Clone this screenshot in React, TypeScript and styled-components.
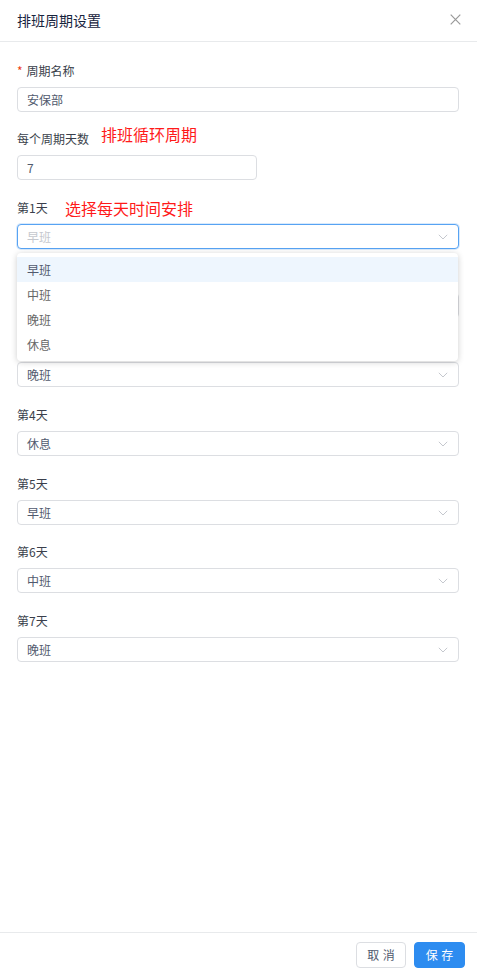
import React from "react";
import styled, { createGlobalStyle } from "styled-components";

const Global = createGlobalStyle`
  html, body { margin: 0; padding: 0; background: #fff; }
  body { font-family: "Noto Sans CJK SC", "Noto Sans", sans-serif; -webkit-font-smoothing: antialiased; }
  * { box-sizing: border-box; }
`;

const Modal = styled.div`
  height: 100vh;
  display: flex;
  flex-direction: column;
  overflow: hidden;
  color: #515a6e;
  font-size: 12px;
`;

const Header = styled.div`
  height: 42px;
  flex: none;
  display: flex;
  align-items: center;
  justify-content: space-between;
  padding: 0 14px 0 17px;
  border-bottom: 1px solid #e8eaec;
`;

const Title = styled.div`
  font-size: 14px;
  color: #17233d;
  line-height: 20px;
  margin-top: -2px;
`;

const Close = styled.button`
  border: 0;
  background: none;
  padding: 0;
  width: 16px;
  height: 16px;
  display: flex;
  align-items: center;
  justify-content: center;
  margin-top: -2px;
  cursor: pointer;
`;

const Body = styled.div`
  flex: 1;
  padding: 21px 18px 0 17px;
`;

const Item = styled.div<{ $tight?: boolean }>`
  position: relative;
  margin-bottom: ${(p) => (p.$tight ? 19 : 20)}px;
`;

const LabelRow = styled.div`
  position: relative;
  height: 16px;
  line-height: 16px;
  margin-bottom: 8px;
  color: #3a3f4b;
  font-size: 12px;
  display: flex;
  align-items: center;
`;

const Star = styled.span`
  color: #ed4014;
  margin-right: 4px;
  font-size: 12px;
`;

const Note = styled.span<{ $left: number; $dy: number }>`
  position: absolute;
  left: ${(p) => p.$left}px;
  top: ${(p) => p.$dy}px;
  color: #ff1a1a;
  font-size: 16px;
  line-height: 16px;
  white-space: nowrap;
`;

const Field = styled.div<{ $width?: number; $focused?: boolean }>`
  width: ${(p) => (p.$width ? `${p.$width}px` : "100%")};
  height: 25px;
  border: 1px solid ${(p) => (p.$focused ? "#57a3f3" : "#dcdee2")};
  box-shadow: ${(p) => (p.$focused ? "0 0 0 1px rgba(45,140,240,0.18)" : "none")};
  border-radius: 4px;
  padding: 0 10px 0 9px;
  display: flex;
  align-items: center;
  justify-content: space-between;
  background: #fff;
`;

const Value = styled.span<{ $placeholder?: boolean }>`
  color: ${(p) => (p.$placeholder ? "#c5c8ce" : "#515a6e")};
  font-size: 12px;
  line-height: 16px;
`;

const Dropdown = styled.div`
  position: absolute;
  left: 0;
  right: 1px;
  top: 53px;
  background: #fff;
  border-radius: 4px;
  box-shadow: 0 1px 6px rgba(0, 0, 0, 0.2);
  padding: 4px 0;
  z-index: 10;
`;

const Option = styled.div<{ $active?: boolean }>`
  height: 25px;
  line-height: 25px;
  padding-left: 10px;
  font-size: 12px;
  color: ${(p) => (p.$active ? "#515a6e" : "#666")};
  background: ${(p) => (p.$active ? "#eef6fe" : "#fff")};
`;

const Footer = styled.div`
  flex: none;
  height: 43px;
  border-top: 1px solid #e8eaec;
  display: flex;
  justify-content: flex-end;
  align-items: center;
  gap: 8px;
  padding: 0 12px 0 0;
`;

const Button = styled.button<{ $primary?: boolean }>`
  height: 26px;
  width: ${(p) => (p.$primary ? 51 : 50)}px;
  border-radius: 4px;
  border: 1px solid ${(p) => (p.$primary ? "#2d8cf0" : "#dcdee2")};
  background: ${(p) => (p.$primary ? "#2d8cf0" : "#fff")};
  color: ${(p) => (p.$primary ? "#fff" : "#515a6e")};
  font-family: inherit;
  font-size: 12px;
  letter-spacing: 0.3em;
  text-indent: 0.3em;
  padding: 0;
  margin-top: 1px;
  cursor: pointer;
`;

const Chevron = () => (
  <svg width="10" height="6" viewBox="0 0 10 6">
    <polyline points="0.8,0.8 5,5 9.2,0.8" fill="none" stroke="#c5c8ce" strokeWidth="1" />
  </svg>
);

const CloseIcon = () => (
  <svg width="11" height="11" viewBox="0 0 11 11">
    <path d="M0.7 0.7 L10.3 10.3 M10.3 0.7 L0.7 10.3" stroke="#999" strokeWidth="1.2" />
  </svg>
);

const days = ["早班", "中班", "晚班", "休息", "早班", "中班", "晚班"];
const options = ["早班", "中班", "晚班", "休息"];

export default function App() {
  return (
    <>
      <Global />
      <Modal>
        <Header>
          <Title>排班周期设置</Title>
          <Close aria-label="关闭">
            <CloseIcon />
          </Close>
        </Header>
        <Body>
          <Item $tight>
            <LabelRow>
              <Star>*</Star>周期名称
            </LabelRow>
            <Field>
              <Value>安保部</Value>
            </Field>
          </Item>
          <Item>
            <LabelRow>
              每个周期天数
              <Note $left={84} $dy={-5}>排班循环周期</Note>
            </LabelRow>
            <Field $width={240}>
              <Value>7</Value>
            </Field>
          </Item>
          {days.map((d, i) => (
            <Item key={i} $tight={i === 4}>
              <LabelRow>
                第{i + 1}天
                {i === 0 && <Note $left={48} $dy={0}>选择每天时间安排</Note>}
              </LabelRow>
              <Field $focused={i === 0}>
                <Value $placeholder={i === 0}>{d}</Value>
                <Chevron />
              </Field>
              {i === 0 && (
                <Dropdown>
                  {options.map((o, j) => (
                    <Option key={o} $active={j === 0}>
                      {o}
                    </Option>
                  ))}
                </Dropdown>
              )}
            </Item>
          ))}
        </Body>
        <Footer>
          <Button>取消</Button>
          <Button $primary>保存</Button>
        </Footer>
      </Modal>
    </>
  );
}
